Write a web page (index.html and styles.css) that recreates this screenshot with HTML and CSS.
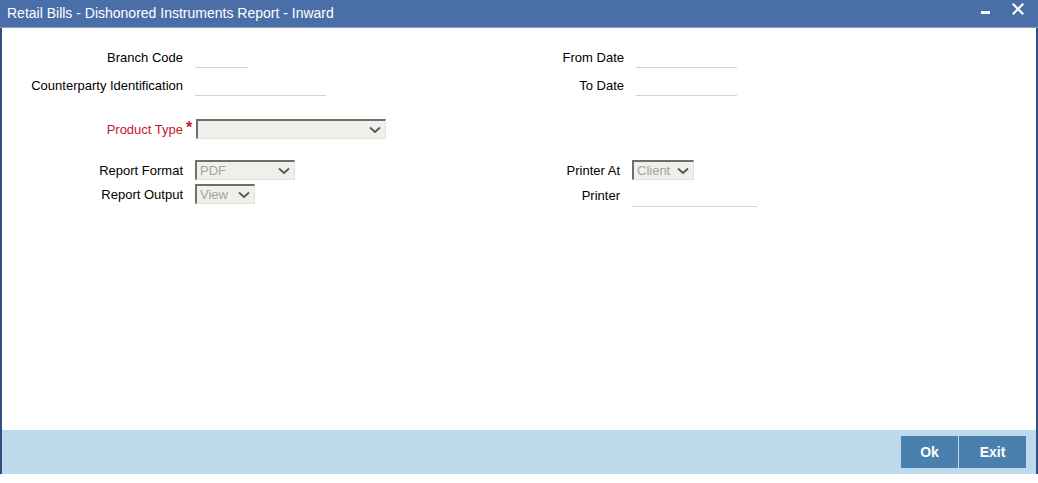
FILE: index.html
```html
<!DOCTYPE html>
<html>
<head>
<meta charset="utf-8">
<link rel="stylesheet" href="styles.css">
</head>
<body>
<div class="window">
  <div class="titlebar">
    <span class="title">Retail Bills - Dishonored Instruments Report - Inward</span>
    <div class="controls">
      <span class="minimize"></span>
      <svg class="close" width="12" height="12" viewBox="0 0 12 12"><path d="M1.5 1.5 L10.5 10.5 M10.5 1.5 L1.5 10.5" stroke="#fff" stroke-width="2.2" stroke-linecap="square"/></svg>
    </div>
  </div>
  <div class="content">
    <div class="section s1">
      <div class="left">
        <div class="row"><span class="label">Branch Code</span><span class="line w53"></span></div>
        <div class="row"><span class="label">Counterparty Identification</span><span class="line w131"></span></div>
      </div>
      <div class="right">
        <div class="row"><span class="label rl84">From Date</span><span class="line w101"></span></div>
        <div class="row"><span class="label rl84">To Date</span><span class="line w101"></span></div>
      </div>
    </div>
    <div class="section s2">
      <div class="left">
        <div class="row"><span class="label req-label">Product Type</span><span class="req">*</span><div class="select w190"><span class="val"></span><svg class="chev" width="12" height="8" viewBox="0 0 12 8"><path d="M1 1.5 L6 6 L11 1.5" fill="none" stroke="#555" stroke-width="1.8"/></svg></div></div>
      </div>
    </div>
    <div class="section s3">
      <div class="left">
        <div class="row short"><span class="label">Report Format</span><div class="select w100"><span class="val">PDF</span><svg class="chev" width="12" height="8" viewBox="0 0 12 8"><path d="M1 1.5 L6 6 L11 1.5" fill="none" stroke="#555" stroke-width="1.8"/></svg></div></div>
        <div class="row short"><span class="label">Report Output</span><div class="select w60"><span class="val">View</span><svg class="chev" width="12" height="8" viewBox="0 0 12 8"><path d="M1 1.5 L6 6 L11 1.5" fill="none" stroke="#555" stroke-width="1.8"/></svg></div></div>
      </div>
      <div class="right">
        <div class="row short"><span class="label rl80">Printer At</span><div class="select w62"><span class="val">Client</span><svg class="chev" width="12" height="8" viewBox="0 0 12 8"><path d="M1 1.5 L6 6 L11 1.5" fill="none" stroke="#555" stroke-width="1.8"/></svg></div></div>
        <div class="row short"><span class="label rl80 down">Printer</span><span class="line w125 low"></span></div>
      </div>
    </div>
  </div>
  <div class="footer">
    <button class="btn ok">Ok</button>
    <button class="btn exit">Exit</button>
  </div>
</div>
</body>
</html>
```
FILE: styles.css
```css
* { box-sizing: border-box; }
html, body { margin: 0; padding: 0; background: #fff; }
body { font-family: "Liberation Sans", Arial, sans-serif; font-size: 13px; color: #000; width: 1038px; height: 483px; overflow: hidden; }

.window {
  width: 1038px;
  height: 474px;
  border-left: 2px solid #2e4f82;
  border-right: 2px solid #2e4f82;
  display: flex;
  flex-direction: column;
}

.titlebar {
  height: 28px;
  background: #4a6ea8;
  border-bottom: 1px solid #8d9db3;
  margin: 0 -2px;
  padding: 0 0 0 7px;
  display: flex;
  align-items: center;
  justify-content: space-between;
}
.title { color: #fff; font-size: 14px; margin-top: -2px; }
.controls { display: flex; align-items: center; height: 100%; padding-right: 14px; }
.minimize { width: 9px; height: 3px; background: #fff; margin-right: 22px; position: relative; top: -1px; }
.close { display: block; margin-top: -9px; }

.content { flex: 1; padding-top: 15px; }
.section { display: flex; }
.left { width: 538px; }
.right { flex: 1; }
.s2 { margin-top: 16px; }
.s3 { margin-top: 15px; }

.row { display: flex; align-items: center; height: 28px; }
.row.short { height: 24px; }
.label { width: 181px; text-align: right; margin-right: 12px; white-space: nowrap; }
.label.rl84 { width: 84px; }
.label.rl80 { width: 80px; }
.label.down { position: relative; top: 1px; }
.label.req-label { color: #c4172c; margin-right: 0; }
.req { color: #c4172c; width: 13px; padding-left: 3px; margin-top: -3px; font-size: 16px; font-weight: bold; line-height: 1; }

.line { display: block; height: 21px; border-bottom: 1px solid #d3d3d3; }
.line.low { align-self: flex-end; height: 22px; margin-bottom: -1px; }
.w53 { width: 53px; }
.w131 { width: 131px; }
.w101 { width: 101px; }
.w125 { width: 125px; }

.select {
  height: 20px;
  background: #f0f0ea;
  border-top: 2px solid #6e6e6e;
  border-left: 2px solid #6e6e6e;
  border-right: 1px solid #e2e2dc;
  border-bottom: 1px solid #e2e2dc;
  display: flex;
  align-items: center;
  justify-content: space-between;
  padding: 0 4px 0 3px;
}
.select .val { color: #a3a3a3; font-size: 13px; margin-top: -1px; }
.select .chev { display: block; }
.w190 { width: 190px; }
.w100 { width: 100px; }
.w60 { width: 60px; }
.w62 { width: 62px; }

.footer {
  height: 44px;
  background: #bfdaed;
  display: flex;
  justify-content: flex-end;
  align-items: flex-start;
  padding: 6px 10px 0 0;
}
.btn {
  height: 32px;
  border: none;
  background: #4a80ae;
  color: #fff;
  font-family: "Liberation Sans", Arial, sans-serif;
  font-size: 14px;
  font-weight: bold;
  padding: 0;
  margin: 0;
}
.btn.ok { width: 57px; margin-right: 1px; }
.btn.exit { width: 67px; }
```
